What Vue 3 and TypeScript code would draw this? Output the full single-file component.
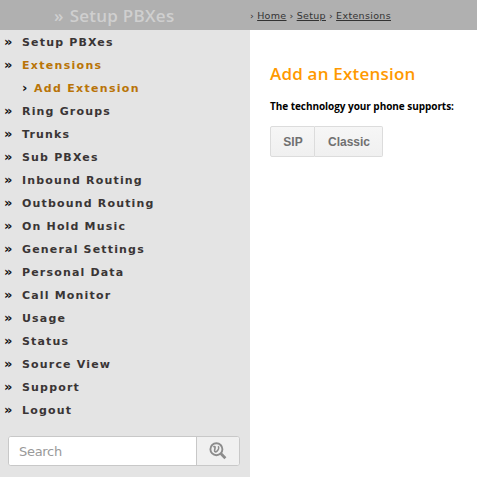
<script setup lang="ts">
interface MenuItem {
  label: string
  active?: boolean
  sub?: boolean
}

const items: MenuItem[] = [
  { label: 'Setup PBXes' },
  { label: 'Extensions', active: true },
  { label: 'Add Extension', active: true, sub: true },
  { label: 'Ring Groups' },
  { label: 'Trunks' },
  { label: 'Sub PBXes' },
  { label: 'Inbound Routing' },
  { label: 'Outbound Routing' },
  { label: 'On Hold Music' },
  { label: 'General Settings' },
  { label: 'Personal Data' },
  { label: 'Call Monitor' },
  { label: 'Usage' },
  { label: 'Status' },
  { label: 'Source View' },
  { label: 'Support' },
  { label: 'Logout' },
]
const crumbs: string[] = ['Home', 'Setup', 'Extensions']
</script>

<template>
  <div class="page">
    <header class="top">
      <div class="brand"><span class="brand-mark">»</span><span>Setup PBXes</span></div>
      <nav class="crumbs">
        <span v-for="c in crumbs" :key="c" class="crumb"><span class="sep">›</span><a>{{ c }}</a></span>
      </nav>
    </header>
    <div class="body">
      <aside class="side">
        <ul class="menu">
          <li v-for="i in items" :key="i.label" :class="{ active: i.active, sub: i.sub }">
            <span class="mark">{{ i.sub ? '›' : '»' }}</span><a>{{ i.label }}</a>
          </li>
        </ul>
        <form class="search" @submit.prevent>
          <input type="text" placeholder="Search" />
          <button type="submit" aria-label="Search">
            <svg width="18" height="18" viewBox="0 0 18 18" fill="none" stroke="#8c8c8c">
              <circle cx="7.4" cy="7.2" r="6" stroke-width="1.9" />
              <path d="M11.8 11.6L16.4 16.2" stroke-width="2.8" />
              <path d="M4.4 5.2C5.5 4.2 6.4 4.3 6.1 5.7L5.6 8.3C5.4 10 6.7 10.2 7.8 9.3C9.5 7.9 10.2 5.6 9.2 4.3" stroke-width="1.6" />
            </svg>
          </button>
        </form>
      </aside>
      <main class="content">
        <h1>Add an Extension</h1>
        <p>The technology your phone supports:</p>
        <div class="buttons"><button>SIP</button><button>Classic</button></div>
      </main>
    </div>
  </div>
</template>

<style>
body {
  margin: 0;
  overflow: hidden;
}
</style>

<style scoped>
.page {
  width: 477px;
  height: 477px;
  display: flex;
  flex-direction: column;
  background: #fff;
  font-family: "DejaVu Sans", sans-serif;
}
.top {
  height: 30px;
  display: flex;
  background: #b0b0b0;
}
.brand {
  box-sizing: border-box;
  width: 250px;
  padding: 1px 0 0 54px;
  display: flex;
  gap: 6px;
  font: 600 17px/30px "Open Sans", sans-serif;
  letter-spacing: 0.25px;
  color: #cfcfcf;
  white-space: nowrap;
}
.crumbs {
  display: flex;
  gap: 3px;
  font-size: 9.5px;
  line-height: 31px;
  letter-spacing: 0.33px;
  color: #333;
}
.crumb {
  display: flex;
  gap: 3px;
}
.crumb a {
  text-decoration: underline;
}
.body {
  flex: 1;
  display: flex;
}
.side {
  width: 250px;
  background: #e4e4e4;
}
.menu {
  margin: 0;
  padding: 1px 0 0 4px;
  list-style: none;
}
.menu li {
  height: 23px;
  display: flex;
  font-size: 11px;
  line-height: 23px;
  font-weight: 700;
  letter-spacing: 1.17px;
  color: #3a3535;
  white-space: nowrap;
}
.mark {
  width: 18px;
  font-size: 13px;
  line-height: 21px;
  letter-spacing: 0;
  color: #111;
}
.menu .active {
  color: #b97408;
  letter-spacing: 1.3px;
}
.menu .sub {
  padding-left: 18px;
}
.menu .active .mark {
  letter-spacing: 0;
}
.sub .mark {
  width: 12px;
}
.search {
  box-sizing: border-box;
  display: flex;
  width: 232px;
  height: 30px;
  margin: 14px 0 0 8px;
  border: 1px solid #c8c8c8;
  border-radius: 3px;
  background: #fff;
  overflow: hidden;
}
.search input {
  flex: 1;
  min-width: 0;
  padding: 0 10px;
  border: 0;
  outline: 0;
  font: 13px "DejaVu Sans", sans-serif;
  letter-spacing: -0.3px;
}
.search input::placeholder {
  color: #999;
  opacity: 1;
}
.search button {
  box-sizing: border-box;
  width: 43px;
  padding: 0;
  border: 0;
  border-left: 1px solid #c8c8c8;
  background: #f0f0f0;
  display: flex;
  align-items: center;
  justify-content: center;
}
.content {
  padding: 32px 0 0 20px;
}
h1 {
  margin: 0;
  font: 600 17px/24px "Open Sans", sans-serif;
  letter-spacing: 0.2px;
  color: #ff9900;
  white-space: nowrap;
}
p {
  margin: 12px 0 0;
  font: 700 10px/16px "Open Sans", sans-serif;
  letter-spacing: -0.05px;
  color: #000;
  white-space: nowrap;
}
.buttons {
  display: flex;
  margin-top: 12px;
}
.buttons button {
  box-sizing: border-box;
  width: 45px;
  height: 31px;
  padding: 0 0 0 1px;
  border: 1px solid #dcdcdc;
  border-radius: 2px 0 0 2px;
  background: linear-gradient(#f6f6f6, #f0f0f0);
  color: #707070;
  font: 700 12px "Liberation Sans", sans-serif;
}
.buttons button + button {
  width: 68px;
  border-left: 0;
  border-radius: 0 2px 2px 0;
}
</style>
